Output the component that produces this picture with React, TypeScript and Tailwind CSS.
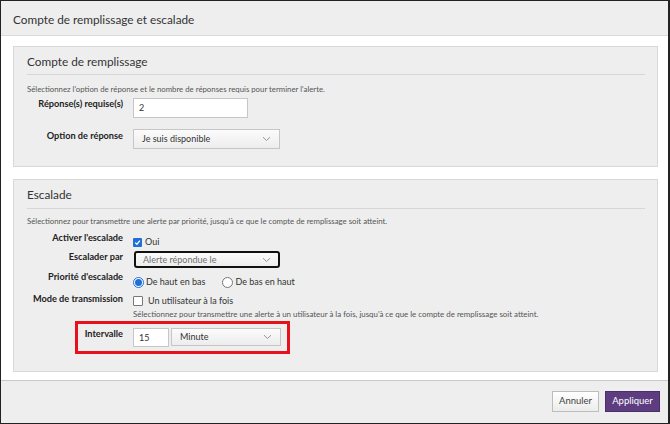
import React from "react";

const Chevron = () => (
  <svg width="9" height="6" viewBox="0 0 9 6" className="shrink-0">
    <path d="M1 1.2 L4.5 4.5 L8 1.2" fill="none" stroke="#8a8a8a" strokeWidth="0.9" />
  </svg>
);

const Label = ({ children }: { children: React.ReactNode }) => (
  <div className="w-[96px] shrink-0 text-right font-bold text-[9.2px] leading-[12px] text-[#222]">{children}</div>
);

export default function App() {
  return (
    <div
      className="w-[670px] h-[424px] flex flex-col bg-white border-y border-l border-r-2 border-[#222] overflow-hidden"
      style={{ fontFamily: "Lato, 'Noto Sans', sans-serif" }}
    >
      {/* header */}
      <div className="h-[35px] shrink-0 bg-[#eeeeee] border-b border-[#d9d9e2] flex items-center pl-[12px]">
        <span className="text-[11.8px] text-[#333] leading-[16px] pt-[3px]">Compte de remplissage et escalade</span>
      </div>

      {/* body */}
      <div className="flex-1 pt-[10px] pl-[12px] pr-[10px]">
        {/* section 1 */}
        <div className="bg-[#eeeeee] border border-[#d8d8d8] pl-[13px] pr-[12px] pt-[7px] pb-[17px]">
          <div className="text-[11.8px] leading-[16px] text-[#333]">Compte de remplissage</div>
          <div className="mt-[4px] h-px bg-[#d6d6d6]" />
          <div className="mt-[9px] text-[7.8px] leading-[10px] text-[#555]">
            Sélectionnez l'option de réponse et le nombre de réponses requis pour terminer l'alerte.
          </div>
          <div className="mt-[4px] flex items-start">
            <Label>Réponse(s) requise(s)</Label>
            <div className="ml-[10px] w-[115px] h-[20px] bg-white border border-[#c6c6c6] flex items-center pl-[5px] text-[9px] text-[#333]">2</div>
          </div>
          <div className="mt-[11px] flex items-start">
            <div className="pt-[1px]"><Label>Option de réponse</Label></div>
            <div className="ml-[10px] w-[147px] h-[20px] bg-gradient-to-b from-[#fbfbfb] to-[#ededed] border border-[#c6c6c6] flex items-center justify-between pl-[8px] pr-[8px] text-[9px] text-[#333]">
              <span>Je suis disponible</span>
              <Chevron />
            </div>
          </div>
        </div>

        {/* section 2 */}
        <div className="mt-[12px] bg-[#eeeeee] border border-[#d8d8d8] pl-[13px] pr-[12px] pt-[7px] pb-[24px]">
          <div className="text-[11.8px] leading-[16px] text-[#333]">Escalade</div>
          <div className="mt-[5px] h-px bg-[#d6d6d6]" />
          <div className="mt-[7px] text-[7.8px] leading-[10px] text-[#555]">
            Sélectionnez pour transmettre une alerte par priorité, jusqu'à ce que le compte de remplissage soit atteint.
          </div>

          {/* Activer */}
          <div className="mt-[6px] h-[19px] flex items-start">
            <Label>Activer l'escalade</Label>
            <div className="ml-[10px] mt-[4px] flex items-center">
              <span className="w-[9px] h-[9px] rounded-[1px] bg-[#1e6fd9] flex items-center justify-center">
                <svg width="7" height="7" viewBox="0 0 7 7">
                  <path d="M1.2 3.6 L2.9 5.2 L5.9 1.6" fill="none" stroke="#fff" strokeWidth="1.3" />
                </svg>
              </span>
              <span className="ml-[3px] text-[9px] leading-[12px] text-[#333]">Oui</span>
            </div>
          </div>

          {/* Escalader par */}
          <div className="h-[20px] flex items-start">
            <Label>Escalader par</Label>
            <div className="ml-[11px] w-[146px] h-[17px] bg-gradient-to-b from-[#fbfbfb] to-[#ededed] border-2 border-[#111] rounded-[3px] flex items-center justify-between pl-[7px] pr-[7px] text-[9px] text-[#6f6f6f]">
              <span>Alerte répondue le</span>
              <Chevron />
            </div>
          </div>

          {/* Priorité */}
          <div className="h-[22px] flex items-start">
            <Label>Priorité d'escalade</Label>
            <div className="ml-[10px] mt-[5px] flex items-center text-[9px] leading-[12px] text-[#333]">
              <span className="w-[11px] h-[11px] rounded-full border border-[#1e6fd9] bg-white flex items-center justify-center">
                <span className="w-[7px] h-[7px] rounded-full bg-[#1e6fd9]" />
              </span>
              <span className="ml-[2px]">De haut en bas</span>
              <span className="ml-[17px] w-[11px] h-[11px] rounded-full border border-[#777] bg-white" />
              <span className="ml-[2px]">De bas en haut</span>
            </div>
          </div>

          {/* Mode */}
          <div className="h-[16px] flex items-start">
            <Label>Mode de transmission</Label>
            <div className="ml-[10px] mt-[2px] flex items-center text-[9px] leading-[12px] text-[#333]">
              <span className="w-[10px] h-[10px] rounded-[1px] border border-[#777] bg-white" />
              <span className="ml-[5px]">Un utilisateur à la fois</span>
            </div>
          </div>
          <div className="ml-[106px] text-[7.9px] leading-[10px] text-[#555]">
            Sélectionnez pour transmettre une alerte à un utilisateur à la fois, jusqu'à ce que le compte de remplissage soit atteint.
          </div>

          {/* Intervalle */}
          <div className="relative mt-[9px] flex items-start">
            <Label>Intervalle</Label>
            <div className="ml-[10px] w-[36px] h-[19px] bg-white border border-[#c6c6c6] flex items-center pl-[5px] text-[9px] text-[#333]">15</div>
            <div className="ml-[2px] w-[110px] h-[18px] bg-gradient-to-b from-[#fbfbfb] to-[#ededed] border border-[#c6c6c6] flex items-center justify-between pl-[8px] pr-[8px] text-[9px] text-[#333]">
              <span>Minute</span>
              <Chevron />
            </div>
            <div className="absolute left-[48px] top-[-7px] w-[215px] h-[33px] border-[3px] border-[#e8101a] pointer-events-none" />
          </div>
        </div>
      </div>

      {/* footer */}
      <div className="h-[43px] shrink-0 bg-[#eeeeee] border-t border-[#c8c8c8] flex items-start justify-end pt-[10px] pr-[8px] gap-[6px]">
        <button className="h-[21px] w-[47px] bg-gradient-to-b from-[#ffffff] to-[#ececec] border border-[#bdbdbd] text-[9.5px] text-[#444]">Annuler</button>
        <button className="h-[21px] w-[55px] bg-[#5d3c80] border border-[#4b2e6a] text-[9.5px] text-white">Appliquer</button>
      </div>
    </div>
  );
}
